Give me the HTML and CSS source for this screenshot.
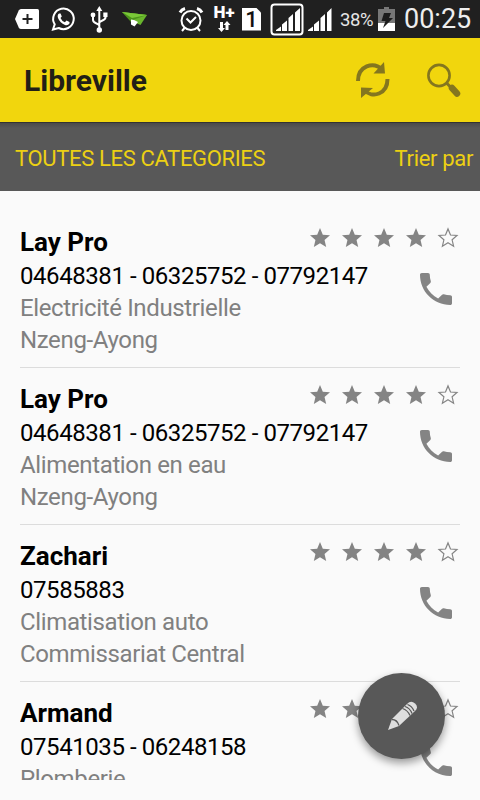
FILE: index.html
```html
<!DOCTYPE html>
<html lang="fr">
<head>
    <meta charset="UTF-8">
    <meta name="viewport" content="width=device-width, initial-scale=1.0">
    <title>Libreville</title>
    <link rel="stylesheet" href="styles.css">
</head>
<body>
    <svg class="defs" width="0" height="0">
        <symbol id="star" viewBox="0 0 24 24"><path d="M12 17.27L18.18 21l-1.64-7.03L22 9.24l-7.19-.61L12 2 9.19 8.63 2 9.24l5.46 4.73L5.82 21z"/></symbol>
        <symbol id="star-empty" viewBox="0 0 24 24"><path d="M12 16.8L17.6 20.2l-1.5-6.4L21 9.5l-6.5-.5L12 2.9 9.5 9 3 9.500l4.900 4.300L6.400 20.200z" fill="none" stroke="currentColor" stroke-width="1.200"/></symbol>
        <symbol id="phone" viewBox="3 3 18 18"><path d="M6.62 10.79c1.440 2.830 3.760 5.140 6.590 6.590l2.200-2.200c.27-.27.670-.36 1.020-.24 1.120.37 2.330.57 3.570.57.55 0 1 .45 1 1V20c0 .55-.45 1-1 1-9.390 0-17-7.610-17-17 0-.55.45-1 1-1h3.500c.55 0 1 .45 1 1 0 1.250.2 2.450.57 3.570.11.35.03.74-.25 1.020l-2.200 2.200z"/></symbol>
    </svg>

    <!-- Status bar -->
    <div class="status-bar">
        <svg class="notifications" width="160" height="38" viewBox="0 0 160 38">
            <path d="M21 9h16.500q1.500 0 1.500 1.500v17q0 1.500-1.500 1.500H21q-1.500 0-2.300-1.500L15 19l3.700-8.500Q19.500 9 21 9z" fill="#fff"/>
            <path d="M27.500 14v10M22.500 19h10" stroke="#222" stroke-width="2"/>
            <path d="M53 29.500l1.700-5.200a10.300 10.300 0 1 1 4 3.700z" fill="none" stroke="#fff" stroke-width="2"/>
            <path d="M59 13.500q-2 1.500-1 4.500 2 5 7 7 3 .8 4.500-1.500v-1.500l-3-1.500-1.600 1.800q-3-1-4.400-4.300l1.300-1.500-1.200-3z" fill="#fff"/>
            <path d="M99.300 9v21M99.300 26c0-3-6.300-2-6.300-6v-4M99.300 23c0-3 6.300-1.500 6.300-6v-3" fill="none" stroke="#fff" stroke-width="2"/>
            <path d="M99.300 6l3 5h-6zM103.300 12.500h4.200V17h-4.200z" fill="#fff"/>
            <circle cx="93" cy="15" r="2.400" fill="#fff"/><circle cx="99.300" cy="30" r="2.700" fill="#fff"/>
            <path d="M122 12l25 3-6.500 10-7-3z" fill="#69b52d"/>
            <path d="M122 12l9 10 3-2.500 13-4.500z" fill="#4c931b"/><path d="M122 12l25 3-15 3z" fill="#7ac838"/>
            <path d="M131 19.500l3 .500 4 2-3.500 4.500-3.500-2z" fill="#fff"/>
        </svg>
        <svg class="alarm" width="26" height="28" viewBox="0 0 26 28" fill="none" stroke="#fff">
            <circle cx="13" cy="15.500" r="9.500" stroke-width="2"/>
            <path d="M8.500 13.500l4 4 5.500-5.500M6.500 23L4 26M19.500 23l2.500 3" stroke-width="2"/>
            <path d="M2 7.500Q3.500 4.500 7 3.500M19 3.500q3.500 1 5 4" stroke-width="3"/>
        </svg>
        <div class="network">
            <span>H+</span>
            <svg width="14" height="12" viewBox="0 0 14 12" fill="#fff"><path d="M3 1h3v6h2l-3.500 4L1 7h2zM8.500 9h3V4h2L10 0 6.500 4h2z"/></svg>
        </div>
        <span class="sim">1</span>
        <svg class="signal signal-boxed" width="34" height="33" viewBox="0 0 34 33" fill="#fff">
            <rect x="1.500" y="1.500" width="31" height="30" rx="3" fill="none" stroke="#fff" stroke-width="2"/>
            <path d="M6 28v-1l5-3.500v4.500zM12 28v-6.500l5-4v10.500zM18.500 28V15l4.500-4V28zM25 28V9.500L30 5v23z"/>
        </svg>
        <svg class="signal" width="24" height="33" viewBox="0 0 24 33" fill="#fff">
            <path d="M0 28v-1l5-3.500v4.500zM6 28v-6.500l5-4v10.500zM12.500 28V15l4.500-4V28zM19 28V9.500L23.500 5v23z"/>
        </svg>
        <span class="battery-level">38%</span>
        <svg class="battery" width="17" height="24" viewBox="0 0 17 24">
            <path d="M0 2h6V0h5v2h6v14H0z" fill="#777"/>
            <path d="M0 16h17v8H0z" fill="#fff"/>
            <path d="M6 6h7l-2 5h4L5 21l2.500-7H3.500z" fill="#1c1c1c"/>
        </svg>
        <span class="clock">00:25</span>
    </div>

    <!-- Toolbar -->
    <header class="toolbar">
        <h1>Libreville</h1>
        <svg class="refresh" width="34" height="36" viewBox="0 0 34 36">
            <path d="M2 19C2 4 17-1 26.500 7.500M31.500 17c0 15-15 20-23.500 11" fill="none" stroke="#84761f" stroke-width="4"/>
            <path d="M28 0l1 11.500H17.500zM5 36V25.500l12 .5z" fill="#84761f"/>
        </svg>
        <svg class="search" width="34" height="34" viewBox="0 0 34 34">
            <circle cx="12" cy="12.500" r="10.600" fill="none" stroke="#84761f" stroke-width="2.600"/>
            <path d="M19.500 20l4 4" stroke="#84761f" stroke-width="3"/>
            <path d="M25 25l5 5.500" stroke="#84761f" stroke-width="6.500" stroke-linecap="round"/>
        </svg>
    </header>

    <!-- Filters -->
    <div class="filters">
        <span>TOUTES LES CATEGORIES</span>
        <span>Trier par</span>
    </div>

    <!-- Contact list -->
    <div class="list">
        <div class="item">
            <div class="info">
                <h2>Lay Pro</h2>
                <p class="number">04648381 - 06325752 - 07792147</p>
                <p>Electricité Industrielle</p>
                <p>Nzeng-Ayong</p>
            </div>
            <div class="actions">
                <div class="stars">
                    <svg><use href="#star"/></svg><svg><use href="#star"/></svg><svg><use href="#star"/></svg><svg><use href="#star"/></svg><svg><use href="#star-empty"/></svg>
                </div>
                <svg class="phone"><use href="#phone"/></svg>
            </div>
        </div>
        <div class="item">
            <div class="info">
                <h2>Lay Pro</h2>
                <p class="number">04648381 - 06325752 - 07792147</p>
                <p>Alimentation en eau</p>
                <p>Nzeng-Ayong</p>
            </div>
            <div class="actions">
                <div class="stars">
                    <svg><use href="#star"/></svg><svg><use href="#star"/></svg><svg><use href="#star"/></svg><svg><use href="#star"/></svg><svg><use href="#star-empty"/></svg>
                </div>
                <svg class="phone"><use href="#phone"/></svg>
            </div>
        </div>
        <div class="item">
            <div class="info">
                <h2>Zachari</h2>
                <p class="number">07585883</p>
                <p>Climatisation auto</p>
                <p>Commissariat Central</p>
            </div>
            <div class="actions">
                <div class="stars">
                    <svg><use href="#star"/></svg><svg><use href="#star"/></svg><svg><use href="#star"/></svg><svg><use href="#star"/></svg><svg><use href="#star-empty"/></svg>
                </div>
                <svg class="phone"><use href="#phone"/></svg>
            </div>
        </div>
        <div class="item">
            <div class="info">
                <h2>Armand</h2>
                <p class="number">07541035 - 06248158</p>
                <p>Plomberie</p>
            </div>
            <div class="actions">
                <div class="stars">
                    <svg><use href="#star"/></svg><svg><use href="#star"/></svg><svg><use href="#star"/></svg><svg><use href="#star"/></svg><svg><use href="#star-empty"/></svg>
                </div>
                <svg class="phone"><use href="#phone"/></svg>
            </div>
        </div>
    </div>

    <button class="fab" aria-label="Modifier">
        <svg width="30" height="30" viewBox="0 0 30 30">
            <path d="M1 29l4-11L20 3q4-4 8-.5t0 7.500L12 25z" fill="#dedede"/>
            <path d="M5 18.500q5 0 7 6M15.500 7.500q5 1.500 7.500 7M18 5.500q5 1.500 7 7M20.500 3.500q4.500 1.500 6.500 6.500" fill="none" stroke="#585858" stroke-width="1.300"/>
        </svg>
    </button>
</body>
</html>
```

FILE: styles.css
```css
* {
    box-sizing: border-box;
    margin: 0;
    padding: 0;
}

body {
    position: relative;
    display: flex;
    flex-direction: column;
    width: 480px;
    height: 800px;
    overflow: hidden;
    font-family: Roboto, sans-serif;
    background-color: #fafafa;
}

svg {
    flex-shrink: 0;
}

.defs {
    position: absolute;
}

.status-bar {
    display: flex;
    align-items: center;
    height: 38px;
    background-color: #202020;
    color: #fff;
}

.alarm {
    margin-left: 18px;
}

.network {
    display: flex;
    flex-direction: column;
    align-items: center;
    width: 20px;
    margin-left: 10px;
    font-size: 17px;
    font-weight: 900;
    line-height: 14px;
}

.network svg {
    margin-top: 2px;
}

.sim {
    width: 19px;
    height: 23px;
    margin-left: 8px;
    background-color: #fff;
    color: #111;
    clip-path: polygon(0 0, 14px 0, 100% 5px, 100% 100%, 0 100%);
    font-size: 22px;
    font-weight: 500;
    line-height: 24px;
    text-align: center;
}

.signal {
    margin-left: 4px;
}

.signal-boxed {
    margin-left: 9px;
}

.battery-level {
    width: 34px;
    margin-left: 8px;
    font-size: 18.5px;
    letter-spacing: -0.4px;
    white-space: nowrap;
    padding-top: 2px;
    color: #e5e5e5;
}

.battery {
    margin-left: 4px;
}

.clock {
    margin-left: 9px;
    font-size: 27px;
    color: #eee;
}

.toolbar {
    display: flex;
    align-items: center;
    flex-shrink: 0;
    height: 84px;
    padding: 0 19px 0 24px;
    background-color: #f1d60d;
}

.toolbar h1 {
    flex: 1;
    font-size: 30px;
    font-weight: 700;
    color: #221f16;
}

.search {
    margin-left: 37px;
}

.filters {
    display: flex;
    align-items: center;
    justify-content: space-between;
    flex-shrink: 0;
    height: 69px;
    padding: 3px 7px 0 15px;
    background: linear-gradient(#333 1px, #4a4a4a 1px, #585858 6px);
    color: #ecd013;
    font-size: 22px;
    letter-spacing: -0.34px;
}

.list {
    height: 569px;
    flex-shrink: 0;
    margin: 20px 20px 0;
    overflow: hidden;
}

.item {
    display: flex;
    justify-content: space-between;
    height: 157px;
    padding-top: 15px;
    border-bottom: 1px solid #dcdcdc;
}

.info {
    width: 0;
    font-size: 24px;
    line-height: 32px;
    letter-spacing: -0.36px;
    color: #808080;
    white-space: nowrap;
}

.info h2 {
    font-size: 26px;
    line-height: 33px;
    letter-spacing: 0;
    margin-bottom: 1px;
    color: #000;
}

.info .number {
    letter-spacing: -0.43px;
    color: #000;
}

.actions {
    display: flex;
    flex-direction: column;
    align-items: flex-end;
    color: #848484;
    fill: currentColor;
}

.stars {
    display: flex;
    gap: 8px;
}

.stars svg {
    width: 24px;
    height: 24px;
}

.phone {
    width: 32px;
    height: 32px;
    margin: 23px 8px 0 0;
}

.fab {
    position: absolute;
    right: 35px;
    top: 673px;
    display: flex;
    align-items: center;
    justify-content: center;
    width: 87px;
    height: 86px;
    border: none;
    border-radius: 50%;
    background-color: #585858;
    box-shadow: 0 4px 9px rgba(0, 0, 0, 0.4);
}
```
